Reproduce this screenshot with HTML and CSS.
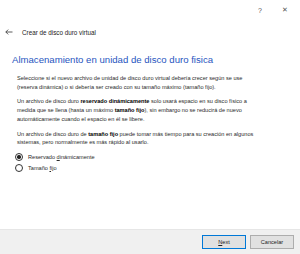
FILE: index.html
```html
<!DOCTYPE html>
<html lang="es">
<head>
    <meta charset="UTF-8">
    <title>Crear de disco duro virtual</title>
    <link rel="stylesheet" href="styles.css">
</head>
<body>
    <div class="window">
        <div class="titlebar">
            <span class="tb-btn">?</span>
            <span class="tb-btn close">&#x2715;</span>
        </div>
        <div class="nav">
            <svg class="back" width="8" height="6" viewBox="0 0 8 6">
                <path d="M7.5 3H0.8M3.2 0.6L0.8 3l2.4 2.4" fill="none" stroke="#333" stroke-width="0.8"/>
            </svg>
            <span class="caption">Crear de disco duro virtual</span>
        </div>
        <h1 class="heading">Almacenamiento en unidad de disco duro fisica</h1>
        <div class="content">
            <p>Seleccione si el nuevo archivo de unidad de disco duro virtual debería crecer según se use<br>
            (reserva dinámica) o si debería ser creado con su tamaño máximo (tamaño fijo).</p>
            <p>Un archivo de disco duro <b>reservado dinámicamente</b> solo usará espacio en su disco físico a<br>
            medida que se llena (hasta un máximo <b>tamaño fijo</b>), sin embargo no se reducirá de nuevo<br>
            automáticamente cuando el espacio en él se libere.</p>
            <p>Un archivo de disco duro de <b>tamaño fijo</b> puede tomar más tiempo para su creación en algunos<br>
            sistemas, pero normalmente es más rápido al usarlo.</p>
            <div class="options">
                <label class="option"><span class="radio checked"></span><span>Reservado <u>d</u>inámicamente</span></label>
                <label class="option"><span class="radio"></span><span>Tamaño <u>f</u>ijo</span></label>
            </div>
        </div>
        <div class="footer">
            <button class="btn primary"><u>N</u>ext</button>
            <button class="btn">Cancelar</button>
        </div>
    </div>
</body>
</html>
```

FILE: styles.css
```css
body {
    margin: 0;
    background: #ffffff;
    font-family: "Liberation Sans", Arial, sans-serif;
    color: #1a1a1a;
}
.window {
    width: 300px;
    height: 254px;
    display: flex;
    flex-direction: column;
}
.titlebar {
    height: 20px;
    display: flex;
    justify-content: flex-end;
    align-items: center;
    padding-right: 12px;
    gap: 20px;
    font-size: 7px;
    color: #555;
}
.nav {
    height: 24px;
    display: flex;
    align-items: center;
    padding-left: 5px;
}
.back {
    margin-right: 9px;
}
.caption {
    font-size: 6.3px;
    color: #222;
}
.heading {
    margin: 10px 0 0 12px;
    font-size: 9.6px;
    line-height: 12px;
    font-weight: normal;
    color: #1f55c0;
}
.content {
    flex: 1;
    padding: 8px 0 0 17px;
    font-size: 5.6px;
    line-height: 8.7px;
    color: #2a2a2a;
}
.content p {
    margin: 0 0 6px 0;
    white-space: nowrap;
}
.content b {
    font-weight: bold;
    color: #000;
}
.options {
    display: flex;
    flex-direction: column;
    gap: 3px;
    margin-top: 1px;
    margin-left: -2px;
}
.option {
    display: flex;
    align-items: center;
    height: 8px;
}
.radio {
    width: 6px;
    height: 6px;
    border: 0.8px solid #333;
    border-radius: 50%;
    margin-right: 5px;
    display: flex;
    align-items: center;
    justify-content: center;
}
.radio.checked::after {
    content: "";
    width: 3.4px;
    height: 3.4px;
    border-radius: 50%;
    background: #222;
}
.footer {
    height: 24px;
    background: #f0f0f0;
    border-top: 1px solid #e6e6e6;
    display: flex;
    justify-content: flex-end;
    align-items: center;
    gap: 4px;
    padding-right: 6px;
}
.btn {
    width: 44px;
    height: 14px;
    padding: 0;
    font-family: "Liberation Sans", Arial, sans-serif;
    font-size: 5.6px;
    color: #222;
    background: #e1e1e1;
    border: 1px solid #adadad;
}
.btn.primary {
    border-color: #0078d7;
}
```
